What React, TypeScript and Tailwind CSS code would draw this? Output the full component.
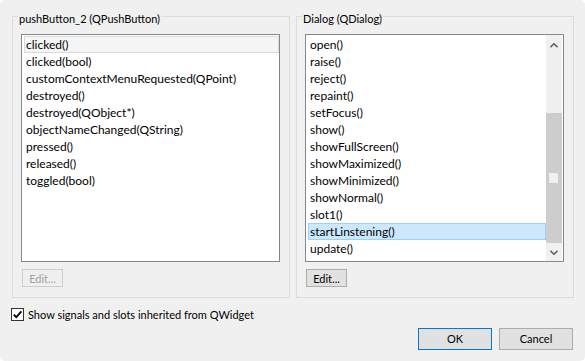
import React from "react";

const signals = [
  "clicked()",
  "clicked(bool)",
  "customContextMenuRequested(QPoint)",
  "destroyed()",
  "destroyed(QObject*)",
  "objectNameChanged(QString)",
  "pressed()",
  "released()",
  "toggled(bool)",
];

const slots = [
  "open()",
  "raise()",
  "reject()",
  "repaint()",
  "setFocus()",
  "show()",
  "showFullScreen()",
  "showMaximized()",
  "showMinimized()",
  "showNormal()",
  "slot1()",
  "startLinstening()",
  "update()",
];

const Chevron: React.FC<{ down?: boolean }> = ({ down }) => (
  <svg width="8" height="5" viewBox="0 0 8 5">
    <path
      d={down ? "M0.5 0.8 L4 4.2 L7.5 0.8" : "M0.5 4.2 L4 0.8 L7.5 4.2"}
      fill="none"
      stroke="#606060"
      strokeWidth="1.6"
    />
  </svg>
);

interface RowProps {
  label: string;
  state?: "current" | "selected";
}

const Row: React.FC<RowProps> = ({ label, state }) => {
  const tone =
    state === "current"
      ? "border-[#dadada] bg-[#f5f5f5]"
      : state === "selected"
        ? "border-[#99d1ff] bg-[#cce8ff]"
        : "border-transparent";
  return (
    <div
      className={`h-[17px] whitespace-nowrap border pl-[1px] text-[12px] leading-[15px] text-black ${tone}`}
    >
      {label}
    </div>
  );
};

const GroupBox: React.FC<{ title: string; children: React.ReactNode }> = ({
  title,
  children,
}) => (
  <div className="relative mt-[16px] flex h-[282px] w-[278px] flex-col border border-[#dcdcdc] pl-[8px] pr-[9px] pt-[17px]">
    <span className="absolute left-[5px] top-[-6px] bg-[#f0f0f0] px-[1px] text-[11px] leading-[16px] text-black">
      {title}
    </span>
    {children}
  </div>
);

const EditButton: React.FC<{ disabled?: boolean }> = ({ disabled }) => (
  <div
    className={`ml-[1px] mt-[7px] flex h-[18px] w-[41px] items-center justify-center border text-[11px] leading-none ${
      disabled
        ? "border-[#cccccc] bg-[#efefef] text-[#a0a0a0]"
        : "border-[#adadad] bg-[#e1e1e1] text-black"
    }`}
  >
    Edit...
  </div>
);

export default function App() {
  return (
    <div className="h-[361px] w-[585px] bg-white font-['Lato',_'Noto_Sans',_sans-serif]">
      <div className="flex h-full w-full flex-col rounded-[5px] bg-[#f0f0f0] pl-[12px] pr-[11px]">
        <div className="flex gap-[6px]">
          <GroupBox title="pushButton_2 (QPushButton)">
            <div className="h-[228px] w-[259px] border border-[#828790] bg-white pl-[2px] pt-[1px]">
              {signals.map((s, i) => (
                <Row key={s} label={s} state={i === 0 ? "current" : undefined} />
              ))}
            </div>
            <EditButton disabled />
          </GroupBox>

          <GroupBox title="Dialog (QDialog)">
            <div className="flex h-[228px] w-[259px] border border-[#828790] bg-white pr-[1px]">
              <div className="flex-1 pl-[2px] pt-[1px]">
                {slots.map((s) => (
                  <Row
                    key={s}
                    label={s}
                    state={s === "startLinstening()" ? "selected" : undefined}
                  />
                ))}
              </div>
              <div className="flex w-[16px] flex-col bg-[#f0f0f0]">
                <div className="flex h-[17px] items-start justify-center pt-[8px]">
                  <Chevron />
                </div>
                <div className="flex-1" />
                <div className="relative h-[130px] w-full bg-[#cdcdcd]">
                  <div className="absolute left-[3px] top-[60px] h-[10px] w-[9px] bg-[#f0f0f0]" />
                </div>
                <div className="flex h-[18px] items-start justify-center pt-[7px]">
                  <Chevron down />
                </div>
              </div>
            </div>
            <EditButton />
          </GroupBox>
        </div>

        <div className="ml-[-1px] mt-[10px] flex h-[13px] items-center gap-[4px]">
          <div className="flex h-[13px] w-[13px] items-center justify-center border border-[#333333] bg-white">
            <svg width="11" height="11" viewBox="0 0 11 11">
              <path
                d="M1.8 5.6 L4.3 8.2 L9.4 2.4"
                fill="none"
                stroke="#000"
                strokeWidth="1.8"
              />
            </svg>
          </div>
          <span className="text-[11px] leading-none text-black">
            Show signals and slots inherited from QWidget
          </span>
        </div>

        <div className="mt-[7px] flex justify-end gap-[7px] pr-[1px]">
          <div className="flex h-[22px] w-[74px] items-center justify-center border border-[#0078d7] bg-[#e1e1e1] text-[11px] text-black">
            OK
          </div>
          <div className="flex h-[22px] w-[74px] items-center justify-center border border-[#adadad] bg-[#e1e1e1] text-[11px] text-black">
            Cancel
          </div>
        </div>
      </div>
    </div>
  );
}
